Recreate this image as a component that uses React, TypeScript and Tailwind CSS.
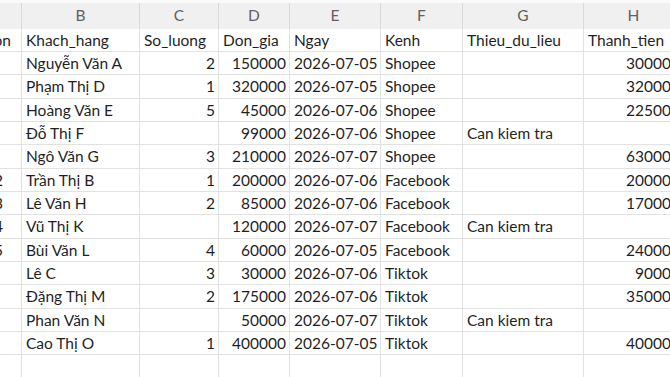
const cols = [
  { key: 'A', w: 'w-[22px]' },
  { key: 'B', w: 'w-[118px]' },
  { key: 'C', w: 'w-[79px]' },
  { key: 'D', w: 'w-[71px]' },
  { key: 'E', w: 'w-[91px]' },
  { key: 'F', w: 'w-[82px]' },
  { key: 'G', w: 'w-[121px]' },
  { key: 'H', w: 'w-[100px]' },
];

type Row = [string, string, string, string, string, string, string, string];

const rows: Row[] = [
  ['', 'Nguyễn Văn A', '2', '150000', '2026-07-05', 'Shopee', '', '300000'],
  ['', 'Phạm Thị D', '1', '320000', '2026-07-05', 'Shopee', '', '320000'],
  ['', 'Hoàng Văn E', '5', '45000', '2026-07-06', 'Shopee', '', '225000'],
  ['', 'Đỗ Thị F', '', '99000', '2026-07-06', 'Shopee', 'Can kiem tra', ''],
  ['', 'Ngô Văn G', '3', '210000', '2026-07-07', 'Shopee', '', '630000'],
  ['DH012', 'Trần Thị B', '1', '200000', '2026-07-06', 'Facebook', '', '200000'],
  ['DH013', 'Lê Văn H', '2', '85000', '2026-07-06', 'Facebook', '', '170000'],
  ['DH014', 'Vũ Thị K', '', '120000', '2026-07-07', 'Facebook', 'Can kiem tra', ''],
  ['DH015', 'Bùi Văn L', '4', '60000', '2026-07-05', 'Facebook', '', '240000'],
  ['', 'Lê C', '3', '30000', '2026-07-06', 'Tiktok', '', '90000'],
  ['', 'Đặng Thị M', '2', '175000', '2026-07-06', 'Tiktok', '', '350000'],
  ['', 'Phan Văn N', '', '50000', '2026-07-07', 'Tiktok', 'Can kiem tra', ''],
  ['', 'Cao Thị O', '1', '400000', '2026-07-05', 'Tiktok', '', '400000'],
  ['', '', '', '', '', '', '', ''],
];

const header: Row = ['Ma_don', 'Khach_hang', 'So_luong', 'Don_gia', 'Ngay', 'Kenh', 'Thieu_du_lieu', 'Thanh_tien'];

// numeric columns are right aligned like Excel
const rightAligned = (i: number, v: string) => i === 0 || /^\d+$/.test(v);

function Cell({ i, v, first }: { i: number; v: string; first?: boolean }) {
  const right = rightAligned(i, v);
  let pad = right ? 'justify-end pr-[3px]' : 'justify-start pl-[4px]';
  if (i === 0) pad = first ? 'justify-end pr-[10px]' : 'justify-end pr-[18px]';
  return (
    <div
      className={`${cols[i].w} shrink-0 h-full flex items-center overflow-hidden whitespace-nowrap border-r border-b border-[#e2e2e2] ${pad}`}
    >
      <span className="pt-[1px]">{v}</span>
    </div>
  );
}

export default function App() {
  return (
    <div
      className="w-[670px] h-[377px] overflow-hidden bg-white text-[#1f1f1f] text-[15.5px] leading-none"
      style={{ fontFamily: 'Lato, "Open Sans", sans-serif' }}
    >
      <div className="h-[3px] bg-[#fafafa]" />
      <div className="flex h-[26px] bg-[#f0f0f0] text-[#616161]">
        {cols.map((c) => (
          <div
            key={c.key}
            className={`${c.w} shrink-0 flex items-center justify-center border-r border-[#d9d9d9]`}
          >
            {c.key === 'A' ? '' : c.key}
          </div>
        ))}
      </div>
      <div className="flex h-[23px]">
        {header.map((v, i) => (
          <Cell key={i} i={i} v={i === 0 ? 'Ma_don' : v} first />
        ))}
      </div>
      {rows.map((r, ri) => (
        <div key={ri} className="flex h-[23.33px]">
          {r.map((v, i) => (
            <Cell key={i} i={i} v={v} />
          ))}
        </div>
      ))}
    </div>
  );
}
